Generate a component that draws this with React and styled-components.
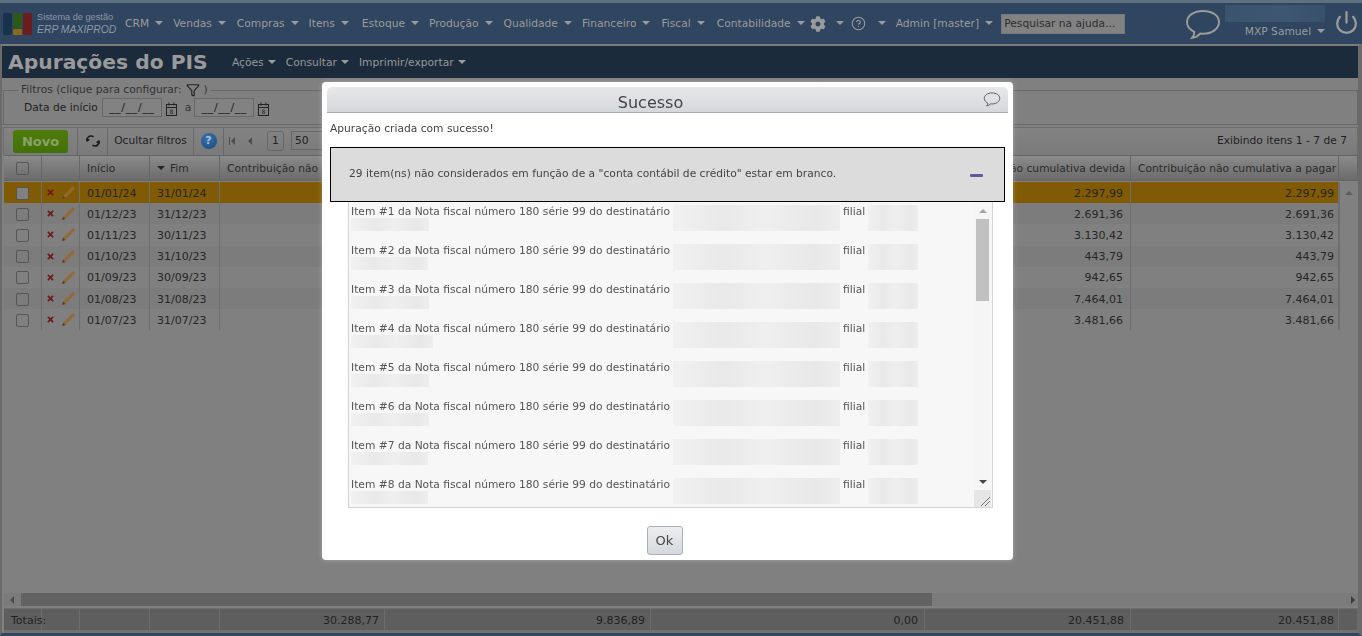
import React from 'react';
import styled, { createGlobalStyle } from 'styled-components';
import { FaCog, FaTimes } from 'react-icons/fa';
import { CircleHelp, Funnel, Power } from 'lucide-react';

const MENUS = [
  ['CRM', 10],
  ['Vendas', 11],
  ['Compras', 10],
  ['Itens', 13],
  ['Estoque', 10],
  ['Produção', 11],
  ['Qualidade', 10],
  ['Financeiro', 11],
  ['Fiscal', 12],
  ['Contabilidade', 5],
];

const COLUMNS = '38px 38px 70px 70px 165px 266px 274px 206px 208px 19px';

const ROWS = [
  ['01/01/24', '31/01/24', '2.297,99'],
  ['01/12/23', '31/12/23', '2.691,36'],
  ['01/11/23', '30/11/23', '3.130,42'],
  ['01/10/23', '31/10/23', '443,79'],
  ['01/09/23', '30/09/23', '942,65'],
  ['01/08/23', '31/08/23', '7.464,01'],
  ['01/07/23', '31/07/23', '3.481,66'],
];

const ITEMS = [78, 77, 78, 82, 78, 78, 77, 77];

const GlobalStyle = createGlobalStyle`
  html, body {
    margin: 0;
    padding: 0;
    height: 100%;
    overflow: hidden;
    background: #808080;
    font-family: "DejaVu Sans", Verdana, sans-serif;
    font-size: 10.7px;
  }
  * {
    box-sizing: border-box;
  }
`;

const Page = styled.div`
  width: 1362px;
  height: 636px;
  display: flex;
  flex-direction: column;
  background: #2f4560;
  border-top: 3px solid #5d7180;
  position: relative;
`;

const TopBar = styled.header`
  height: 41px;
  flex-shrink: 0;
  display: flex;
  align-items: center;
  padding-left: 3px;
  color: #9b9b9b;
`;

const Logo = styled.div`
  display: flex;
  align-items: center;
  gap: 4px;
  width: 122px;
  flex-shrink: 0;
`;

const LogoMark = styled.svg`
  width: 30px;
  height: 22px;
  flex-shrink: 0;
`;

const LogoText = styled.div`
  display: flex;
  flex-direction: column;
  gap: 2px;
  font-family: "Liberation Sans", sans-serif;
  font-size: 9.2px;
  line-height: 10px;
  white-space: nowrap;
  color: #8d98a5;
`;

const LogoName = styled.span`
  font-size: 10.4px;
  font-style: italic;
  line-height: 11px;
`;

const MenuItem = styled.div`
  display: flex;
  align-items: center;
  flex-shrink: 0;
  gap: 6px;
  margin-right: ${({ $gap }) => $gap ?? 10}px;
  white-space: nowrap;
`;

const IconItem = styled(MenuItem)`
  gap: ${({ $inner }) => $inner}px;
`;

const SubMenuItem = styled(MenuItem)`
  gap: 4px;
  margin-right: 10px;
`;

const Caret = styled.span`
  width: 0;
  height: 0;
  flex-shrink: 0;
  margin-top: -2px;
  border-left: 4.5px solid transparent;
  border-right: 4.5px solid transparent;
  border-top: 4.5px solid ${({ $color }) => $color ?? '#9b9b9b'};
`;

const SearchBox = styled.div`
  width: 124px;
  height: 20px;
  flex-shrink: 0;
  padding-left: 2px;
  display: flex;
  align-items: center;
  background: #828282;
  border: 1px solid #6f7a86;
  color: #2e2e2e;
  white-space: nowrap;
`;

const ChatIcon = styled.svg`
  width: 36px;
  height: 31px;
  flex-shrink: 0;
  margin-left: 60px;
  margin-top: 1px;
`;

const UserBlock = styled.div`
  width: 100px;
  flex-shrink: 0;
  margin-left: 4px;
  display: flex;
  flex-direction: column;
  align-items: flex-end;
  gap: 3px;
  margin-top: -4px;
`;

const UserBlur = styled.div`
  width: 100px;
  height: 17px;
  background: linear-gradient(90deg, #3c536d, #3f5670 60%, #385069);
`;

const UserName = styled.div`
  display: flex;
  align-items: center;
  gap: 6px;
  color: #9b9b9b;
`;

const PowerSlot = styled.div`
  margin-left: 9px;
  margin-top: -3px;
  display: flex;
  color: #9b9b9b;
`;

const Main = styled.main`
  flex: 1;
  min-height: 0;
  display: flex;
  flex-direction: column;
  background: #808080;
  border-top: 2px solid #7c7c7c;
  border-left: 2px solid #6a6a6a;
  border-right: 4px solid #6a6a6a;
  border-bottom: 3px solid #2f4560;
`;

const TitleBar = styled.div`
  height: 32px;
  flex-shrink: 0;
  display: flex;
  align-items: center;
  padding-left: 6px;
  background: #1b2b3b;
  color: #9a9a9a;
`;

const Title = styled.h1`
  margin: 0 24px 0 0;
  width: 200px;
  font-size: 20.3px;
  font-weight: bold;
  white-space: nowrap;
`;

const SubMenu = styled.div`
  display: flex;
  align-items: center;
  margin-top: 1px;
  color: #979797;
`;

const Filters = styled.fieldset`
  height: 42px;
  margin: 5px 0 0 1px;
  padding: 0 0 0 20px;
  border: 1px solid #686868;
  min-inline-size: 0;
`;

const FilterLegend = styled.legend`
  display: flex;
  align-items: center;
  gap: 4px;
  margin-left: -6px;
  padding: 0 3px;
  color: #333;
  line-height: 12px;
`;

const FilterRow = styled.div`
  display: flex;
  align-items: center;
  gap: 3px;
  margin-top: 1px;
  color: #1f1f1f;
`;

const DateInput = styled.div`
  width: 60px;
  height: 19px;
  margin-left: 1px;
  border: 1px solid #686868;
  background: #828282;
  color: #222;
  font-size: 11px;
  line-height: 17px;
  text-align: center;
  letter-spacing: 0.6px;
`;

const CalendarIcon = styled.svg`
  width: 13px;
  height: 14px;
  margin-top: 2px;
`;

const FilterSep = styled.span`
  margin: 0 -1px 0 4px;
  color: #333;
`;

const Toolbar = styled.div`
  height: 28px;
  flex-shrink: 0;
  margin: 2px 0 0 1px;
  display: flex;
  align-items: stretch;
  padding-left: 9px;
  border: 1px solid #6c6c6c;
  border-bottom: 0;
  background: linear-gradient(#838383, #7a7a7a);
  color: #1f1f1f;
`;

const NewButton = styled.div`
  width: 55px;
  height: 23px;
  margin: 2px 9px 0 0;
  border-radius: 3px;
  display: flex;
  align-items: center;
  justify-content: center;
  background: linear-gradient(#4f7c0c, #417005);
  color: #88a268;
  font-size: 13px;
  font-weight: bold;
`;

const ToolCell = styled.div`
  display: flex;
  align-items: center;
  justify-content: center;
  width: ${({ $w }) => $w}px;
  padding-bottom: 2px;
  border-left: 1px solid #686868;
  flex-shrink: 0;
`;

const HelpBadge = styled.div`
  width: 16px;
  height: 16px;
  border-radius: 50%;
  display: flex;
  align-items: center;
  justify-content: center;
  background: radial-gradient(circle at 40% 30%, #3a72ad, #17497f);
  color: #a9bed4;
  font-size: 11px;
  font-weight: bold;
`;

const Pager = styled.div`
  display: flex;
  align-items: center;
  gap: 13px;
  padding-left: 5px;
  padding-bottom: 2px;
  border-left: 1px solid #686868;
  color: #555;
`;

const FirstPage = styled.span`
  display: flex;
  align-items: center;
  gap: 1px;
  &::before {
    content: '';
    width: 1px;
    height: 8px;
    background: #4d4d4d;
  }
`;

const PageButton = styled.div`
  width: 17px;
  height: 20px;
  margin-left: 2px;
  border: 1px solid #666;
  border-radius: 3px;
  display: flex;
  align-items: center;
  justify-content: center;
  color: #222;
`;

const PageSize = styled.div`
  width: 40px;
  height: 19px;
  margin-left: -6px;
  padding-left: 3px;
  border: 1px solid #666;
  color: #222;
  line-height: 17px;
`;

const ItemsInfo = styled.div`
  margin-left: auto;
  display: flex;
  align-items: center;
  padding-right: 10px;
  padding-bottom: 3px;
  color: #1f1f1f;
`;

const TableHead = styled.div`
  display: grid;
  grid-template-columns: ${COLUMNS};
  height: 26px;
  flex-shrink: 0;
  margin-left: 2px;
  margin-bottom: 1px;
  background: linear-gradient(#8a8a8a, #6b6b6b);
  border-top: 1px solid #656565;
  border-bottom: 1px solid #646464;
  color: #2b2b2b;
`;

const HeadCell = styled.div`
  display: flex;
  align-items: center;
  gap: 5px;
  padding: 0 7px;
  overflow: hidden;
  white-space: nowrap;
  justify-content: ${({ $center }) => ($center ? 'center' : 'flex-start')};
  border-right: 1px solid #666;
`;

const Row = styled.div`
  display: grid;
  grid-template-columns: ${COLUMNS};
  height: 21.2px;
  flex-shrink: 0;
  margin-left: 2px;
  color: #262626;
  font-size: 11px;
`;

const Cell = styled.div`
  display: flex;
  align-items: center;
  gap: 6px;
  padding: 1px 7px 0;
  white-space: nowrap;
  justify-content: ${({ $align }) => $align ?? 'flex-start'};
  background: ${({ $bg }) => $bg};
  border-right: 1px solid #6e6e6e;
  &:nth-child(9) {
    padding-right: 4px;
  }
`;

const ActionCell = styled(Cell)`
  padding: 0 0 0 4px;
`;

const ScrollCell = styled.div`
  background: #808080;
  border-left: 1px solid #6e6e6e;
  display: flex;
  justify-content: center;
  align-items: center;
`;

const ArrowUp = styled.span`
  width: 0;
  height: 0;
  border-left: 4px solid transparent;
  border-right: 4px solid transparent;
  border-bottom: 4px solid ${({ $color }) => $color ?? '#5c5c5c'};
`;

const ArrowDown = styled(ArrowUp)`
  border-bottom: 0;
  border-top: 4px solid ${({ $color }) => $color ?? '#5c5c5c'};
`;

const ArrowSide = styled.span`
  width: 0;
  height: 0;
  border-top: 4px solid transparent;
  border-bottom: 4px solid transparent;
  ${({ $right }) => ($right ? 'border-left: 4px solid #3a3a3a;' : 'border-right: 4px solid #4d4d4d;')}
`;

const CheckBox = styled.span`
  width: 13px;
  height: 13px;
  border: 1px solid #555;
  border-radius: 2px;
  background: ${({ $bg }) => $bg ?? 'transparent'};
`;

const PencilIcon = styled.svg`
  width: 15px;
  height: 15px;
  flex-shrink: 0;
`;

const Spacer = styled.div`
  flex: 1;
`;

const HScroll = styled.div`
  height: 13px;
  flex-shrink: 0;
  margin-left: 2px;
  margin-bottom: 2px;
  display: flex;
  align-items: center;
  padding: 0 3px 0 6px;
  background: #7b7b7b;
`;

const HThumb = styled.div`
  width: 911px;
  height: 13px;
  margin: 0 auto 0 7px;
  background: #626262;
`;

const Totals = styled.div`
  display: grid;
  grid-template-columns: ${COLUMNS};
  height: 25px;
  flex-shrink: 0;
  margin-left: 2px;
  background: #5e5e5e;
  border-top: 1px solid #6e6e6e;
  border-bottom: 3px solid #707070;
  color: #222;
  font-size: 11px;
`;

const TotalCell = styled.div`
  display: flex;
  align-items: center;
  padding: 1px 6px 0 7px;
  justify-content: ${({ $right }) => ($right ? 'flex-end' : 'flex-start')};
  border-right: 1px solid #6c6c6c;
  white-space: nowrap;
  &:nth-child(5),
  &:nth-child(6) {
    padding-right: 5px;
  }
  &:nth-child(9) {
    padding-right: 4px;
  }
`;

const Modal = styled.div`
  position: fixed;
  left: 322px;
  top: 82px;
  width: 691px;
  height: 478px;
  padding: 5px;
  background: #fff;
  border-radius: 4px;
  box-shadow: 0 0 5px rgba(255, 255, 255, 0.3);
  display: flex;
  flex-direction: column;
`;

const ModalHeader = styled.div`
  height: 26px;
  flex-shrink: 0;
  display: flex;
  align-items: center;
  justify-content: center;
  position: relative;
  background: linear-gradient(#e7e8ea, #d5d8db);
  border-bottom: 1px solid #a7adb5;
  border-radius: 5px 5px 0 0;
  color: #444;
  font-size: 16px;
  padding: 5px 34px 0 0;
`;

const ModalChat = styled.svg`
  position: absolute;
  right: 7px;
  top: 5px;
  width: 18px;
  height: 15px;
`;

const Message = styled.p`
  margin: 0;
  padding: 9px 0 0 3px;
  height: 34px;
  flex-shrink: 0;
  color: #444;
  line-height: 13px;
`;

const Notice = styled.div`
  width: 675px;
  height: 55px;
  flex-shrink: 0;
  margin-left: 3px;
  padding: 0 21px 2px 18px;
  display: flex;
  align-items: center;
  justify-content: space-between;
  background: #dcdcdc;
  border: 1px solid #000;
  color: #444;
`;

const Collapse = styled.span`
  width: 13px;
  height: 3px;
  margin-top: 3px;
  border-radius: 1px;
  background: #5f5a9e;
`;

const ListBox = styled.div`
  width: 645px;
  height: 306px;
  flex-shrink: 0;
  margin-left: 21px;
  display: flex;
  background: #f7f7f7;
  border: 1px solid #d4d4d4;
  border-top: 0;
  overflow: hidden;
`;

const ListBody = styled.div`
  flex: 1;
  min-width: 0;
  padding: 3px 0 0 2px;
  color: #555;
`;

const Item = styled.div`
  height: 39px;
`;

const ItemLine = styled.div`
  display: flex;
  height: 13px;
  line-height: 13px;
  white-space: nowrap;
`;

const ItemText = styled.span`
  width: ${({ $w }) => $w}px;
  padding-left: ${({ $pad }) => $pad ?? 0}px;
  flex-shrink: 0;
`;

const Blur = styled.div`
  width: ${({ $w }) => $w}px;
  height: ${({ $h }) => $h ?? 26}px;
  flex-shrink: 0;
  background: linear-gradient(90deg, #f1f1f1, #e9e9e9 30%, #efefef 55%, #e8e8e8 85%, #eeeeee);
`;

const ListScroll = styled.div`
  width: 15px;
  margin-right: 2px;
  display: flex;
  flex-direction: column;
  align-items: center;
  background: #f5f5f5;
`;

const ScrollArrow = styled.div`
  height: 17px;
  flex-shrink: 0;
  display: flex;
  align-items: center;
  justify-content: center;
`;

const ListThumb = styled.div`
  width: 13px;
  height: 82px;
  flex-shrink: 0;
  background: #c1c1c1;
`;

const ListTrack = styled.div`
  flex: 1;
`;

const ResizeGrip = styled.svg`
  width: 17px;
  height: 17px;
  flex-shrink: 0;
  background: #e6e6e6;
`;

const ModalFooter = styled.div`
  flex: 1;
  display: flex;
  justify-content: center;
  padding: 18px 6px 0 0;
`;

const OkButton = styled.button`
  width: 36px;
  height: 29px;
  padding: 0;
  border: 1px solid #aab0b8;
  border-radius: 3px;
  background: linear-gradient(#eceeef, #d6d9dc);
  color: #444;
  font-family: inherit;
  font-size: 13px;
`;

const SpeechBubble = ({ as: Comp, stroke, width = 3 }) => (
  <Comp viewBox="0 0 37 32" fill="none" stroke={stroke} strokeWidth={width}>
    <path d="M18.5 2C9 2 2 7 2 13.5c0 4.3 3 8 7.5 10 .2 2.4-.8 4.6-2.3 6.3 3.4-.5 6.4-2.2 8.3-4.5 1 .1 2 .2 3 .2 9.5 0 16.5-5.2 16.5-12S28 2 18.5 2Z" />
  </Comp>
);

const Calendar = () => (
  <CalendarIcon viewBox="0 0 13 14" fill="none" stroke="#222">
    <rect x="1.5" y="2.5" width="10" height="11" />
    <path d="M1.5 5.5h10M4 .5v3M9 .5v3" />
    <text x="6.5" y="12" fontSize="6" textAnchor="middle" fill="#222" stroke="none">8</text>
  </CalendarIcon>
);

const Pencil = ({ color }) => (
  <PencilIcon viewBox="0 0 16 16">
    <path d="M1 15l1.2-3.6L11.8 1.8c.5-.5 1.2-.5 1.7 0l.7.7c.5.5.5 1.2 0 1.7L4.600 13.800Z" fill={color} />
    <path d="M1 15l1.200-3.600 2.400 2.400Z" fill="#4a4030" />
  </PencilIcon>
);

const App = () => (
  <Page>
    <GlobalStyle />
    <TopBar>
      <Logo>
        <LogoMark viewBox="0 0 30 22">
          <rect x="0" y="0" width="9" height="22" rx="2" fill="#17324f" />
          <rect x="10" y="0" width="9" height="15" rx="1" fill="#2b5a18" />
          <rect x="10" y="16" width="9" height="6" rx="1" fill="#8a6a12" />
          <rect x="20" y="0" width="9" height="22" rx="2" fill="#6a1c1e" />
        </LogoMark>
        <LogoText>
          <span>Sistema de gestão</span>
          <LogoName>ERP MAXIPROD</LogoName>
        </LogoText>
      </Logo>
      {MENUS.map(([name, gap]) => (
        <MenuItem key={name} $gap={gap}>
          {name}
          <Caret />
        </MenuItem>
      ))}
      <IconItem $gap={7} $inner={10}>
        <FaCog size={16} />
        <Caret />
      </IconItem>
      <IconItem $gap={10} $inner={12}>
        <CircleHelp size={15} strokeWidth={1.7} />
        <Caret />
      </IconItem>
      <MenuItem $gap={8}>
        Admin [master]
        <Caret />
      </MenuItem>
      <SearchBox>Pesquisar na ajuda...</SearchBox>
      <SpeechBubble as={ChatIcon} stroke="#9b9b9b" width={2} />
      <UserBlock>
        <UserBlur />
        <UserName>
          MXP Samuel
          <Caret />
        </UserName>
      </UserBlock>
      <PowerSlot>
        <Power size={25} strokeWidth={2.2} />
      </PowerSlot>
    </TopBar>
    <Main>
      <TitleBar>
        <Title>Apurações do PIS</Title>
        <SubMenu>
          <SubMenuItem>Ações<Caret /></SubMenuItem>
          <SubMenuItem>Consultar<Caret /></SubMenuItem>
          <SubMenuItem>Imprimir/exportar<Caret /></SubMenuItem>
        </SubMenu>
      </TitleBar>
      <Filters>
        <FilterLegend>
          Filtros (clique para configurar:
          <Funnel size={14} color="#222" />
          )
        </FilterLegend>
        <FilterRow>
          Data de início
          <DateInput>__/__/__</DateInput>
          <Calendar />
          <FilterSep>a</FilterSep>
          <DateInput>__/__/__</DateInput>
          <Calendar />
        </FilterRow>
      </Filters>
      <Toolbar>
        <NewButton>Novo</NewButton>
        <ToolCell $w={30}>
          <svg width="14" height="12" viewBox="0 0 14 12" fill="none" stroke="#1c1c1c" strokeWidth="1.6">
            <path d="M1 5c.4-2.4 2-4 4-4 1 0 1.8.3 2.5 1M13 7c-.4 2.4-2 4-4 4-1 0-1.8-.3-2.5-1" />
            <path d="M0 3.500l1.200 2.400L3.400 4.400M14 8.500l-1.200-2.400-2.200 1.500" />
          </svg>
        </ToolCell>
        <ToolCell $w={86}>Ocultar filtros</ToolCell>
        <ToolCell $w={30}><HelpBadge>?</HelpBadge></ToolCell>
        <Pager>
          <FirstPage><ArrowSide /></FirstPage>
          <ArrowSide />
          <PageButton>1</PageButton>
          <PageSize>50</PageSize>
        </Pager>
        <ItemsInfo>Exibindo itens 1 - 7 de 7</ItemsInfo>
      </Toolbar>
      <TableHead>
        <HeadCell $center><CheckBox /></HeadCell>
        <HeadCell />
        <HeadCell>Início</HeadCell>
        <HeadCell><ArrowDown $color="#222" />Fim</HeadCell>
        <HeadCell>Contribuição não cumulativa</HeadCell>
        <HeadCell />
        <HeadCell />
        <HeadCell>Contribuição não cumulativa devida</HeadCell>
        <HeadCell>Contribuição não cumulativa a pagar</HeadCell>
        <HeadCell />
      </TableHead>
      {ROWS.map(([start, end, value], i) => {
        const bg = i === 0 ? '#805a04' : i % 2 ? '#7c7c7c' : '#808080';
        return (
          <Row key={start}>
            <Cell $bg={bg} $align="center"><CheckBox $bg={i === 0 ? '#808080' : undefined} /></Cell>
            <ActionCell $bg={bg}>
              <FaTimes size={9} color="#701818" />
              <Pencil color={i === 0 ? '#90682c' : '#93693a'} />
            </ActionCell>
            <Cell $bg={bg}>{start}</Cell>
            <Cell $bg={bg}>{end}</Cell>
            <Cell $bg={bg} />
            <Cell $bg={bg} />
            <Cell $bg={bg} />
            <Cell $bg={bg} $align="flex-end">{value}</Cell>
            <Cell $bg={bg} $align="flex-end">{value}</Cell>
            <ScrollCell>{i === 0 && <ArrowUp />}</ScrollCell>
          </Row>
        );
      })}
      <Spacer />
      <HScroll>
        <ArrowSide />
        <HThumb />
        <ArrowSide $right />
      </HScroll>
      <Totals>
        <TotalCell>Totais:</TotalCell>
        <TotalCell />
        <TotalCell />
        <TotalCell />
        <TotalCell $right>30.288,77</TotalCell>
        <TotalCell $right>9.836,89</TotalCell>
        <TotalCell $right>0,00</TotalCell>
        <TotalCell $right>20.451,88</TotalCell>
        <TotalCell $right>20.451,88</TotalCell>
        <TotalCell />
      </Totals>
    </Main>
    <Modal>
      <ModalHeader>
        Sucesso
        <SpeechBubble as={ModalChat} stroke="#555" width={2} />
      </ModalHeader>
      <Message>Apuração criada com sucesso!</Message>
      <Notice>
        29 item(ns) não considerados em função de a "conta contábil de crédito" estar em branco.
        <Collapse />
      </Notice>
      <ListBox>
        <ListBody>
          {ITEMS.map((w, i) => (
            <Item key={i}>
              <ItemLine>
                <ItemText $w={322}>Item #{i + 1} da Nota fiscal número 180 série 99 do destinatário</ItemText>
                <Blur $w={167} />
                <ItemText $w={28} $pad={3}>filial</ItemText>
                <Blur $w={50} />
              </ItemLine>
              <Blur $w={w} $h={13} />
            </Item>
          ))}
        </ListBody>
        <ListScroll>
          <ScrollArrow><ArrowUp $color="#a3a3a3" /></ScrollArrow>
          <ListThumb />
          <ListTrack />
          <ScrollArrow><ArrowDown $color="#444" /></ScrollArrow>
          <ResizeGrip viewBox="0 0 17 17" stroke="#777">
            <path d="M7 16 16 7M11 16l5-5" />
          </ResizeGrip>
        </ListScroll>
      </ListBox>
      <ModalFooter>
        <OkButton>Ok</OkButton>
      </ModalFooter>
    </Modal>
  </Page>
);

export default App;
